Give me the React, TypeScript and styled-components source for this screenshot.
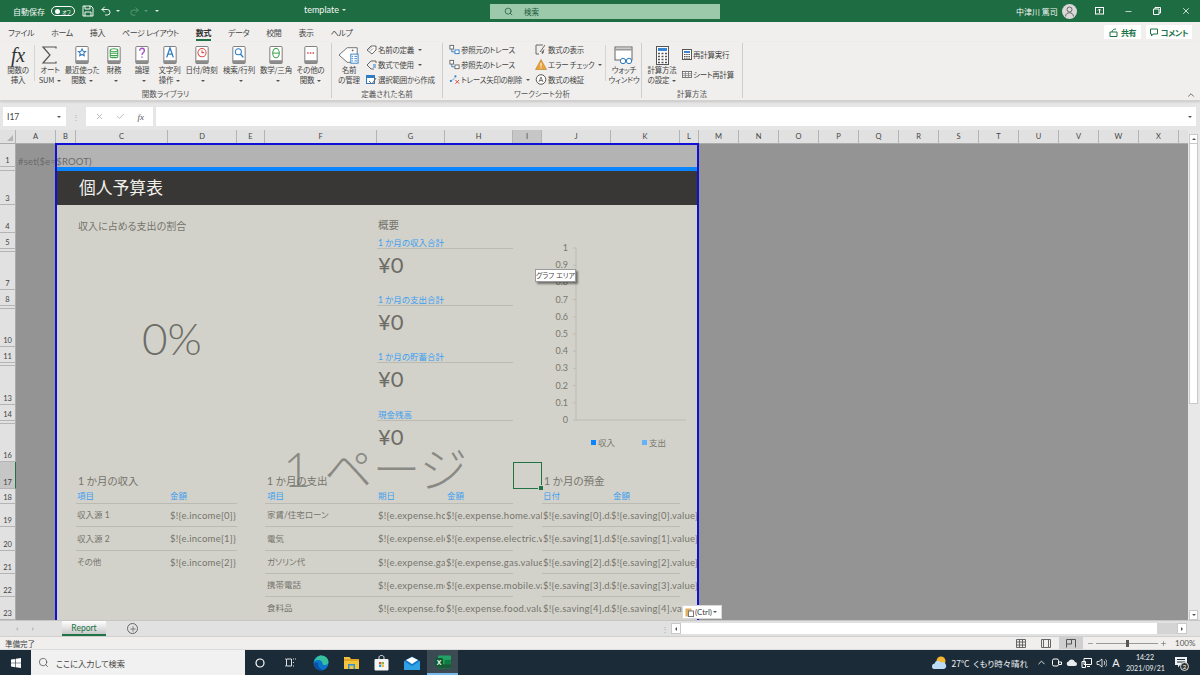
import React from "react";
import styled, { createGlobalStyle } from "styled-components";
import { Search, X, Check, ChevronUp, Undo2, Redo2, Plus, Minus } from "lucide-react";

const GlobalStyle = createGlobalStyle`
    html, body {
        margin: 0;
        padding: 0;
        width: 1200px;
        height: 675px;
        overflow: hidden;
        background: #f0efed;
        font-family: "Noto Sans CJK JP", "Noto Sans", sans-serif;
        font-feature-settings: "palt";
    }
    * {
        box-sizing: border-box;
    }
    svg {
        display: block;
        flex: none;
    }
`;

const Page = styled.div`
    width: 1200px;
    height: 675px;
    display: flex;
    flex-direction: column;
`;

/* title bar */
const TitleBar = styled.div`
    height: 22px;
    flex: none;
    position: relative;
    background: #1e6c41;
    color: #f2f7f4;
    display: flex;
    align-items: center;
    font-size: 8px;
`;
const QuickAccess = styled.div`
    width: 490px;
    display: flex;
    align-items: center;
    padding-left: 13px;
    gap: 6px;
`;
const AutoSaveToggle = styled.div`
    width: 24px;
    height: 10px;
    margin-right: 1px;
    border: 1px solid #fff;
    border-radius: 5px;
    display: flex;
    align-items: center;
    padding-left: 3px;
    gap: 2px;
    font-size: 5px;
    &::before {
        content: "";
        width: 5px;
        height: 5px;
        border-radius: 50%;
        background: #fff;
    }
`;
const MenuCaret = styled.span`
    margin-left: -2px;
    margin-right: 3px;
    width: 0;
    height: 0;
    border-left: 2px solid transparent;
    border-right: 2px solid transparent;
    border-top: 2px solid ${(p) => p.color ?? "#dfeae4"};
`;
const DocName = styled.div`
    position: absolute;
    left: 304px;
    top: 4px;
    display: flex;
    align-items: center;
    gap: 5px;
    font-family: "Lato", sans-serif;
    font-size: 9px;
`;
const SearchBox = styled.div`
    width: 230px;
    height: 15px;
    background: #9bc9aa;
    color: #22593b;
    display: flex;
    align-items: center;
    padding-left: 14px;
    gap: 11px;
    font-size: 7.5px;
`;
const AccountArea = styled.div`
    flex: 1;
    display: flex;
    align-items: center;
    padding-left: 296px;
`;
const UserName = styled.span`
    width: 46px;
    font-size: 8px;
    white-space: nowrap;
`;
const Avatar = styled.div`
    width: 15px;
    height: 15px;
    border-radius: 50%;
    background: #d8d8d8;
    display: flex;
    align-items: center;
    justify-content: center;
`;
const WindowButton = styled.div<{ $w: number }>`
    width: ${(p) => p.$w}px;
    display: flex;
    justify-content: center;
`;

/* tabs */
const TabRow = styled.div`
    height: 20px;
    flex: none;
    display: flex;
    align-items: center;
    padding-left: 8px;
    gap: 17px;
    font-size: 8px;
    letter-spacing: -0.4px;
    color: #444;
    background: #f0efed;
`;
const Tab = styled.div<{ $active?: boolean }>`
    height: 16px;
    line-height: 15px;
    margin-top: 2px;
    font-weight: ${(p) => (p.$active ? 700 : 400)};
    color: ${(p) => (p.$active ? "#333" : "#444")};
    border-bottom: 2px solid ${(p) => (p.$active ? "#217346" : "transparent")};
`;
const ShareArea = styled.div`
    margin-left: auto;
    display: flex;
    gap: 5px;
    padding-right: 8px;
`;
const ShareButton = styled.div<{ $w: number }>`
    width: ${(p) => p.$w}px;
    height: 14px;
    background: #fff;
    color: #217346;
    font-size: 8px;
    font-weight: 700;
    display: flex;
    align-items: center;
    justify-content: center;
    gap: 3px;
`;

/* ribbon */
const Ribbon = styled.div`
    height: 59px;
    flex: none;
    display: flex;
    background: #f0efed;
    border-bottom: 1px solid #d2d1cf;
    box-shadow: 0 1px 2px #c8c8c8;
    position: relative;
    z-index: 1;
`;
const Group = styled.div<{ $w: number }>`
    width: ${(p) => p.$w}px;
    display: flex;
    flex-direction: column;
    margin: 1px 0 2px;
    border-right: 1px solid #cfcecc;
`;
const GroupBody = styled.div`
    flex: 1;
    display: flex;
`;
const GroupLabel = styled.div`
    height: 11px;
    line-height: 13px;
    text-align: center;
    font-size: 7.5px;
    color: #555;
`;
const BigButton = styled.div<{ $w: number; $left?: number }>`
    width: ${(p) => p.$w}px;
    margin-left: ${(p) => p.$left ?? 0}px;
    flex: none;
    display: flex;
    flex-direction: column;
    align-items: center;
    padding-top: 2px;
    font-size: 7.5px;
    line-height: 10px;
    letter-spacing: -0.2px;
    color: #444;
    text-align: center;
    white-space: nowrap;
`;
const BigIcon = styled.div`
    height: 20px;
    display: flex;
    align-items: center;
    justify-content: center;
`;
const LabelLine = styled.div`
    height: 10px;
`;
const FxGlyph = styled.span`
    font-family: "Liberation Serif", serif;
    font-style: italic;
    font-size: 20px;
    line-height: 20px;
    color: #333;
`;
const Caret = styled.span`
    display: inline-block;
    width: 0;
    height: 0;
    margin-left: 3px;
    vertical-align: middle;
    border-left: 2px solid transparent;
    border-right: 2px solid transparent;
    border-top: 2px solid #555;
`;
const Divider = styled.div`
    width: 1px;
    height: 36px;
    margin: 2px 1px 0;
    background: #d6d5d3;
    flex: none;
`;
const SmallColumn = styled.div<{ $w: number; $top?: number; $left?: number }>`
    width: ${(p) => p.$w}px;
    flex: none;
    display: flex;
    flex-direction: column;
    margin-top: -1px;
    padding-top: ${(p) => p.$top ?? 0}px;
    padding-left: ${(p) => p.$left ?? 0}px;
`;
const SmallButton = styled.div<{ $h?: number }>`
    height: ${(p) => p.$h ?? 15}px;
    display: flex;
    align-items: center;
    gap: 1px;
    font-size: 7.5px;
    letter-spacing: -0.25px;
    color: #444;
    white-space: nowrap;
`;
const CollapseButton = styled.div`
    margin-left: auto;
    align-self: flex-end;
    padding: 0 4px 0 0;
    color: #555;
`;

/* formula bar */
const FormulaBar = styled.div`
    height: 29px;
    flex: none;
    background: #e6e6e6;
    display: flex;
    align-items: center;
    padding: 2px 4px 0 3px;
`;
const NameBox = styled.div`
    width: 63px;
    height: 19px;
    background: #fff;
    display: flex;
    align-items: center;
    justify-content: space-between;
    padding: 0 5px 0 4px;
    font-family: "Lato", sans-serif;
    font-size: 8.5px;
    color: #444;
`;
const Grip = styled.div`
    width: 20px;
    text-align: center;
    font-size: 8px;
    color: #aaa;
`;
const FormulaButtons = styled.div`
    width: 67px;
    height: 19px;
    background: #fff;
    display: flex;
    align-items: center;
    justify-content: space-around;
    padding: 0 3px;
    color: #aaa;
`;
const FxSmall = styled.span`
    font-family: "Liberation Serif", serif;
    font-style: italic;
    font-size: 9px;
    color: #555;
`;
const FormulaInput = styled.div`
    flex: 1;
    height: 19px;
    margin-left: 3px;
    background: #fff;
    display: flex;
    align-items: center;
    justify-content: flex-end;
    padding-right: 4px;
`;

/* sheet */
const SheetRow = styled.div`
    height: 490px;
    flex: none;
    display: flex;
`;
const Sheet = styled.div`
    width: 1188px;
    position: relative;
    overflow: hidden;
    background: #949494;
    display: grid;
    grid-template-columns: 16px 40px 20px 92px 69px 28px 112px 68px 68px 29px 69px 69px 19px repeat(12, 40px) 1fr;
    grid-template-rows: 14px 23px 4px 34px 28px 16px 3px 38px 16px 3px 38px 16px 3px 39px 16px 3px 38px 27px 15px 23px 24px 23px 23px 23px;
    font-family: "Lato", "Noto Sans CJK JP", sans-serif;
    color: #74746d;
`;
const ColumnHeader = styled.div<{ $col: number; $selected?: boolean }>`
    grid-row: 1;
    grid-column: ${(p) => p.$col};
    background: ${(p) => (p.$selected ? "#c6c6c6" : "#e1e1e1")};
    border-right: 1px solid #b4b4b4;
    border-bottom: 1px solid ${(p) => (p.$selected ? "#217346" : "#ababab")};
    font-size: 7.5px;
    line-height: 13px;
    text-align: center;
    color: #444;
`;
const FillerHeader = styled.div`
    grid-row: 1;
    grid-column: 26;
    background: #e1e1e1;
    border-bottom: 1px solid #ababab;
`;
const CornerCell = styled.div`
    grid-row: 1;
    grid-column: 1;
    background: #e1e1e1;
    border-right: 1px solid #b4b4b4;
    border-bottom: 1px solid #ababab;
    position: relative;
    &::after {
        content: "";
        position: absolute;
        right: 2px;
        bottom: 2px;
        border-left: 6px solid transparent;
        border-bottom: 6px solid #b4b4b4;
    }
`;
const RowHeader = styled.div<{ $row: number; $selected?: boolean }>`
    grid-column: 1;
    grid-row: ${(p) => p.$row + 1};
    background: ${(p) => (p.$selected ? "#c6c6c6" : "#e1e1e1")};
    border-right: 1px solid ${(p) => (p.$selected ? "#217346" : "#ababab")};
    border-bottom: 1px solid #b4b4b4;
    overflow: hidden;
    display: flex;
    align-items: flex-end;
    justify-content: center;
    font-size: 7.5px;
    line-height: 11px;
    color: #444;
`;

const columns = "ABCDEFGHIJKLMNOPQRSTUVWX".split("");
const colLine = (c: string) => columns.indexOf(c) + 2;

type Span = { $from: string; $to?: string; $row: number; $rowEnd?: number };
const Cell = styled.div<Span & { $align?: string; $pad?: number; $blue?: boolean }>`
    grid-column: ${(p) => colLine(p.$from)} / ${(p) => colLine(p.$to ?? p.$from) + 1};
    grid-row: ${(p) => p.$row + 1} / ${(p) => (p.$rowEnd ?? p.$row) + 2};
    display: flex;
    align-items: ${(p) => p.$align ?? "center"};
    padding-left: ${(p) => p.$pad ?? 1}px;
    font-size: 8.5px;
    line-height: 1.2;
    white-space: nowrap;
    overflow: hidden;
    min-width: 0;
    color: ${(p) => (p.$blue ? "#3c9ff0" : "#74746d")};
`;
const ValueCell = styled(Cell)`
    font-size: 9.5px;
    letter-spacing: 0.25px;
`;
const Band = styled.div<Span & { $bg: string }>`
    grid-column: ${(p) => colLine(p.$from)} / ${(p) => colLine(p.$to ?? p.$from) + 1};
    grid-row: ${(p) => p.$row + 1} / ${(p) => (p.$rowEnd ?? p.$row) + 2};
    background: ${(p) => p.$bg};
`;
const Rule = styled.div<Span>`
    grid-column: ${(p) => colLine(p.$from)} / ${(p) => colLine(p.$to ?? p.$from) + 1};
    grid-row: ${(p) => p.$row + 1};
    align-self: end;
    height: 1px;
    background: #bcbbb3;
`;
const SetCell = styled(Cell)`
    overflow: visible;
    color: #6a6a6a;
    padding-left: 2px;
    align-items: flex-end;
    font-size: 9.5px;
    letter-spacing: 0.2px;
`;
const HeadingCell = styled(Cell)`
    color: #f0f0ea;
    font-size: 16.8px;
    padding-left: 3px;
    overflow: visible;
`;
const SectionTitle = styled(Cell)<{ $size?: number }>`
    overflow: visible;
    font-size: ${(p) => p.$size ?? 10.5}px;
    align-items: flex-end;
    padding-bottom: 1px;
`;
const BigPercent = styled(Cell)`
    justify-content: center;
    font-size: 44px;
    padding: 0 0 18px 3px;
    font-weight: 300;
    color: #6d6d67;
    overflow: visible;
`;
const SummaryLabel = styled(Cell)`
    align-items: flex-end;
    padding-bottom: 1px;
    overflow: visible;
`;
const Yen = styled(Cell)`
    align-items: flex-start;
    font-size: 22px;
    overflow: visible;
    padding-top: 0;
    color: #6d6d67;
`;
const ReportFrame = styled.div`
    grid-column: ${colLine("B")} / ${colLine("L") + 1};
    grid-row: 2 / -1;
    border: 2px solid #1010d8;
    border-bottom: none;
    margin-left: -1px;
    margin-top: -1px;
    pointer-events: none;
`;
const SelectedCell = styled.div`
    grid-column: ${colLine("I")};
    grid-row: 18;
    border: 1.5px solid #217346;
    position: relative;
    &::after {
        content: "";
        position: absolute;
        right: -3px;
        bottom: -3px;
        width: 4px;
        height: 4px;
        background: #217346;
        border: 1px solid #d3d2ca;
    }
`;
const ChartCell = styled.div`
    grid-column: ${colLine("I")} / ${colLine("L") + 1};
    grid-row: 6 / 18;
    position: relative;
`;
const ChartTip = styled.div`
    position: absolute;
    left: 22px;
    top: 36px;
    width: 41px;
    height: 13px;
    background: #fff;
    border: 1px solid #9a9a9a;
    box-shadow: 2px 2px 2px rgba(0, 0, 0, 0.45);
    font-size: 7px;
    line-height: 11px;
    text-align: center;
    color: #444;
    white-space: nowrap;
`;
const Watermark = styled.div`
    position: absolute;
    left: 283px;
    top: 304px;
    font-size: 48px;
    line-height: 70px;
    color: rgba(110, 110, 106, 0.72);
    white-space: nowrap;
    font-weight: 300;
    pointer-events: none;
`;
const PasteOptions = styled.div`
    position: absolute;
    left: 682px;
    top: 475px;
    width: 40px;
    height: 14px;
    background: #fff;
    border: 1px solid #d8d8d8;
    display: flex;
    align-items: center;
    gap: 1px;
    padding-left: 2px;
    font-size: 8px;
    color: #444;
`;
const VScroll = styled.div`
    flex: 1;
    background: #e8e8e8;
    display: flex;
    flex-direction: column;
    padding: 4px 2px 0 1px;
    height: 490px;
`;
const ScrollArrow = styled.div`
    flex: none;
    height: 10px;
    background: #fff;
    border: 1px solid #c9c9c9;
    display: flex;
    align-items: center;
    justify-content: center;
`;
const VThumb = styled.div`
    flex: none;
    height: 260px;
    background: #fff;
    border: 1px solid #c9c9c9;
    border-top: none;
`;
const VSpacer = styled.div`
    flex: 1;
`;
const Triangle = styled.span<{ $dir: "up" | "down" | "left" | "right"; $color?: string }>`
    width: 0;
    height: 0;
    border: 2.5px solid transparent;
    ${(p) => `border-${{ up: "bottom", down: "top", left: "right", right: "left" }[p.$dir]}-color: ${p.$color ?? "#555"};`}
    ${(p) => `margin-${{ up: "top", down: "bottom", left: "left", right: "right" }[p.$dir]}: -2px;`}
`;

/* sheet tabs */
const TabStrip = styled.div`
    height: 17px;
    flex: none;
    position: relative;
    background: #e1e1e1;
    border-top: 1px solid #c6c6c6;
    border-bottom: 1px solid #cfcfcf;
    display: flex;
    align-items: center;
`;
const TabArrows = styled.div`
    width: 62px;
    display: flex;
    gap: 14px;
    padding-left: 16px;
`;
const SheetTab = styled.div`
    width: 44px;
    height: 15px;
    margin-top: -1px;
    background: linear-gradient(#ffffff, #c9c9c9);
    border-bottom: 2px solid #217346;
    color: #217346;
    font-family: "Lato", sans-serif;
    font-size: 8.5px;
    line-height: 14px;
    text-align: center;
`;
const AddSheet = styled.div`
    width: 11px;
    height: 11px;
    margin-left: 21px;
    border: 1px solid #666;
    border-radius: 50%;
    display: flex;
    align-items: center;
    justify-content: center;
    color: #555;
`;
const StripGrip = styled.div`
    margin-left: auto;
    width: 12px;
    color: #aaa;
    font-size: 8px;
    text-align: center;
`;
const HScroll = styled.div`
    width: 516px;
    height: 11px;
    margin-right: 13px;
    display: flex;
    background: #d4d4d4;
`;
const HArrow = styled(ScrollArrow)`
    width: 10px;
    height: 11px;
`;
const HThumb = styled.div`
    width: 476px;
    background: #fff;
`;
const HSpace = styled.div`
    flex: 1;
`;

/* status bar */
const StatusBar = styled.div`
    height: 13px;
    flex: none;
    background: #f0efed;
    border-bottom: 1px solid #dcdcdc;
    display: flex;
    align-items: center;
    padding-left: 5px;
    font-size: 7.5px;
    color: #444;
`;
const ViewArea = styled.div`
    margin-left: auto;
    display: flex;
    align-items: center;
    height: 100%;
`;
const ViewButton = styled.div<{ $active?: boolean }>`
    width: 24px;
    height: 100%;
    margin-left: 1px;
    background: ${(p) => (p.$active ? "#cfcfcf" : "transparent")};
    display: flex;
    align-items: center;
    justify-content: center;
`;
const ZoomMinus = styled.div`
    margin-left: 3.5px;
`;
const ZoomSlider = styled.div`
    width: 62px;
    height: 1px;
    margin: 0 2px;
    background: #999;
    position: relative;
    &::after {
        content: "";
        position: absolute;
        left: 30px;
        top: -3px;
        width: 3px;
        height: 7px;
        background: #555;
    }
`;
const ZoomValue = styled.span`
    width: 33.5px;
    padding-left: 8.5px;
    font-family: "Lato", sans-serif;
    font-size: 8px;
    color: #555;
`;

/* taskbar */
const Taskbar = styled.div`
    height: 25px;
    flex: none;
    background: #1b2b37;
    display: flex;
    align-items: center;
    color: #eef1f3;
`;
const StartButton = styled.div`
    width: 31px;
    display: flex;
    justify-content: center;
`;
const TaskSearch = styled.div`
    width: 214px;
    height: 25px;
    background: #f1f1f1;
    color: #444;
    display: flex;
    align-items: center;
    gap: 7px;
    padding-left: 7px;
    font-size: 8.2px;
`;
const TaskIcon = styled.div<{ $active?: boolean }>`
    width: 30.4px;
    height: 25px;
    display: flex;
    align-items: center;
    justify-content: center;
    background: ${(p) => (p.$active ? "#3b4a53" : "transparent")};
    border-bottom: ${(p) => (p.$active ? "2px solid #76b9ed" : "none")};
`;
const TaskIcons = styled.div`
    display: flex;
`;
const Tray = styled.div`
    margin-left: auto;
    display: flex;
    align-items: center;
    font-size: 8.5px;
`;
const WeatherText = styled.span`
    width: 87px;
    padding-left: 5px;
    white-space: nowrap;
    word-spacing: 2px;
`;
const TrayIcon = styled.div`
    width: 15px;
    display: flex;
    justify-content: center;
    font-family: "Liberation Sans", sans-serif;
    font-size: 11px;
`;
const Clock = styled.div`
    width: 38px;
    margin-left: 2.5px;
    text-align: center;
    font-family: "Lato", sans-serif;
    font-size: 7px;
    line-height: 11px;
    white-space: nowrap;
`;
const NotifyBox = styled.div`
    width: 34px;
    margin-right: 2px;
    display: flex;
    justify-content: center;
    position: relative;
`;
const NotifyBadge = styled.span`
    position: absolute;
    left: 16px;
    top: 5px;
    width: 9px;
    height: 9px;
    border-radius: 50%;
    background: #333;
    border: 1px solid #ddd;
    font-family: "Lato", sans-serif;
    font-size: 6px;
    line-height: 7px;
    text-align: center;
    color: #fff;
`;

/* ---- icons ---- */
const Book = ({ color, children }: { color: string; children: React.ReactNode }) => (
    <svg width="14" height="18" viewBox="0 0 14 19">
        <rect x="0.5" y="0.5" width="13" height="18" rx="1" fill="#fff" stroke="#777" />
        <rect x="0.5" y="15" width="13" height="3.5" fill="#8c8c8c" />
        <g stroke={color} fill="none" strokeWidth="1.1" color={color}>
            {children}
        </g>
    </svg>
);
const SigmaIcon = () => (
    <svg width="18" height="18" viewBox="0 0 18 18">
        <path d="M15 2.5V1H2l7 8-7 8h13v-1.5" fill="none" stroke="#555" strokeWidth="1.2" />
    </svg>
);
const NameTagIcon = () => (
    <svg width="22" height="20" viewBox="0 0 24 22">
        <path d="M1 11 10 3h11v16H10z" fill="#fff" stroke="#666" />
        <circle cx="16" cy="6" r="1" fill="#666" />
        <rect x="14" y="10" width="8" height="10" fill="#fff" stroke="#2f7cc4" />
        <path d="M15 12.5h1.5M18 12.5h3M15 15h1.5M18 15h3M15 17.5h1.5M18 17.5h3" stroke="#2f7cc4" />
    </svg>
);
const TagIcon = () => (
    <svg width="11" height="10" viewBox="0 0 11 10">
        <path d="M1 5 5 1h5v4L6 9z" fill="#fff" stroke="#666" />
        <path d="M2.5 5 5.5 2M4 6.5 7 3.5" stroke="#999" />
    </svg>
);
const UseInFormulaIcon = () => (
    <svg width="11" height="10" viewBox="0 0 11 10">
        <path d="M1 5 5 1h5v2M8 9H5L1 5" fill="none" stroke="#666" />
        <path d="M7 5h3M7 7h3" stroke="#2f7cc4" />
    </svg>
);
const FromSelectionIcon = () => (
    <svg width="11" height="10" viewBox="0 0 11 10">
        <rect x="0.5" y="0.5" width="8" height="8" fill="#fff" stroke="#2f7cc4" />
        <rect x="1" y="1" width="7" height="2" fill="#2f7cc4" />
        <path d="m3 6 3 3 4-6" fill="none" stroke="#666" />
    </svg>
);
const TraceIcon = ({ flip }: { flip?: boolean }) => (
    <svg width="11" height="11" viewBox="0 0 12 11">
        <rect x="1" y="1" width="4" height="4" fill="#fff" stroke="#666" />
        <rect x="6.5" y="6" width="4.5" height="4" fill="#fff" stroke={flip ? "#666" : "#2f7cc4"} />
        <path d="M3 5v3h3" fill="none" stroke="#2f7cc4" />
    </svg>
);
const TraceRemoveIcon = () => (
    <svg width="11" height="11" viewBox="0 0 12 11">
        <path d="m2 8 5-5" stroke="#2f7cc4" strokeDasharray="1.5 1" />
        <rect x="1" y="6" width="2" height="2" fill="#2f7cc4" />
        <rect x="6" y="1" width="2" height="2" fill="#2f7cc4" />
        <path d="m7 6 4 4m0-4-4 4" stroke="#d9413a" />
    </svg>
);
const ShowFormulaIcon = () => (
    <svg width="12" height="11" viewBox="0 0 12 11">
        <path d="M8 1H1v9h3M10 1 5 8" fill="none" stroke="#666" />
        <path d="M7 10c1-.5 1-4 2-4.500M6.500 8H9" fill="none" stroke="#333" strokeWidth="0.8" />
    </svg>
);
const WarningIcon = () => (
    <svg width="12" height="11" viewBox="0 0 12 11">
        <path d="M6 .5 11.500 10.500H.5z" fill="#e8a33d" stroke="#b97c1f" strokeWidth="0.6" />
        <path d="M6 4v3.500M6 8.500v1" stroke="#fff" />
    </svg>
);
const EvalIcon = () => (
    <svg width="12" height="11" viewBox="0 0 12 11">
        <circle cx="6" cy="5.500" r="4.800" fill="#fff" stroke="#555" />
        <path d="M4 8 6 3l2 5M4.800 6.500h2.400" fill="none" stroke="#555" strokeWidth="0.8" />
    </svg>
);
const WatchIcon = () => (
    <svg width="20" height="19" viewBox="0 0 20 19">
        <rect x="1" y="1" width="17" height="13" fill="#fff" stroke="#666" />
        <path d="M1 3.500h17" stroke="#999" strokeWidth="2" />
        <circle cx="9" cy="15" r="2.700" fill="#fff" stroke="#2f7cc4" />
        <circle cx="15" cy="15" r="2.700" fill="#fff" stroke="#2f7cc4" />
        <path d="M11.500 14.500h1" stroke="#2f7cc4" />
    </svg>
);
const CalculatorIcon = () => (
    <svg width="13" height="19" viewBox="0 0 13 19">
        <rect x="0.5" y="0.5" width="12" height="18" fill="#fff" stroke="#555" />
        <rect x="2" y="2" width="9" height="3" fill="#3a86d0" />
        <path d="M2 7.500h9M2 10.500h9M2 13.500h9M2 16.500h9" stroke="#555" strokeWidth="1.5" strokeDasharray="2 1.500" />
    </svg>
);
const CalcNowIcon = () => (
    <svg width="10" height="11" viewBox="0 0 10 11">
        <rect x="0.5" y="0.5" width="9" height="10" fill="#fff" stroke="#555" />
        <rect x="2" y="2" width="6" height="2" fill="#3a86d0" />
        <path d="M2 5.500h6M2 7.500h6M2 9.200h6" stroke="#555" strokeDasharray="1.500 .7" />
    </svg>
);
const CalcSheetIcon = () => (
    <svg width="10" height="11" viewBox="0 0 13 11">
        <rect x="0.5" y="1.500" width="12" height="8" fill="#fff" stroke="#555" />
        <path d="M4.500 1.500v8M8.500 1.500v8M.5 4.500h12M.5 7h12" stroke="#777" />
    </svg>
);
const SaveIcon = () => (
    <svg width="12" height="12" viewBox="0 0 12 12">
        <path d="M1 1h8l2 2v8H1zM3 1v3h5V1M3 11V7h6v4" fill="none" stroke="#f2f7f4" />
    </svg>
);
const WindowsLogo = () => (
    <svg width="10" height="10" viewBox="0 0 10 10">
        <path d="M0 1.500 4.200.9v3.900H0zM4.800.8 10 0v4.800H4.800zM0 5.300h4.200v3.900L0 8.600zM4.800 5.300H10V10l-5.200-.8z" fill="#fff" />
    </svg>
);
const EdgeLogo = () => (
    <svg width="16" height="16" viewBox="0 0 16 16">
        <circle cx="8" cy="8" r="7.500" fill="#0c74c9" />
        <path d="M1 7c1-4 4-6.500 7.500-6.500C12.500.5 15.500 3.500 15.500 7c0 2-1.500 3-3.500 3-1.500 0-2.500-.5-2.500-1.500C9.500 6 7 4.500 4.500 5 2.800 5.300 1.800 6 1 7z" fill="#35c1a0" />
        <path d="M5 8c-.5 3 1.500 6 5.500 7-4 1.200-8.500-1-9.500-6 1-1.300 2.500-1.800 4-1z" fill="#0b4f9e" />
    </svg>
);
const ExplorerLogo = () => (
    <svg width="15" height="14" viewBox="0 0 15 14">
        <path d="M0 1h5.500l1.500 2h8v10H0z" fill="#f3c33e" />
        <rect y="3" width="15" height="2" fill="#e2a522" />
        <rect x="4" y="8" width="7" height="5" fill="#2f8fd8" />
        <rect x="5.500" y="9.500" width="4" height="3.500" fill="#f3c33e" />
    </svg>
);
const StoreLogo = () => (
    <svg width="15" height="16" viewBox="0 0 15 16">
        <path d="M5 4V2.500C5 1.200 6 .5 7.500.5S10 1.200 10 2.500V4" fill="none" stroke="#eee" />
        <rect x="0.500" y="4" width="14" height="11.500" rx="1" fill="#f5f5f5" />
        <rect x="5" y="7" width="2.300" height="2.300" fill="#e8503a" />
        <rect x="7.700" y="7" width="2.300" height="2.300" fill="#7cbb3c" />
        <rect x="5" y="9.700" width="2.300" height="2.300" fill="#2c9be0" />
        <rect x="7.700" y="9.700" width="2.300" height="2.300" fill="#f5b92f" />
    </svg>
);
const MailLogo = () => (
    <svg width="16" height="14" viewBox="0 0 16 14">
        <path d="M0 5 8 .5 16 5v9H0z" fill="#1479c9" />
        <path d="m2 4 6-3 6 3-6 4z" fill="#fff" />
        <path d="M0 5v9h16V5L8 10z" fill="#2fa2e6" />
    </svg>
);
const ExcelLogo = () => (
    <svg width="16" height="14" viewBox="0 0 16 14">
        <rect x="3" y="0.500" width="13" height="13" rx="1" fill="#21a366" />
        <rect x="9.500" y="4.800" width="6.500" height="4.400" fill="#107c41" />
        <rect x="3" y="9.200" width="13" height="4.300" fill="#185c37" />
        <rect y="3" width="8" height="8" rx="1" fill="#0e5c30" />
        <text x="4" y="9.500" textAnchor="middle" fontSize="7" fontWeight="700" fill="#fff" fontFamily="Liberation Sans">
            X
        </text>
    </svg>
);
const WeatherIcon = () => (
    <svg width="15" height="14" viewBox="0 0 15 14">
        <circle cx="9" cy="5" r="4.500" fill="#f5b72f" />
        <path d="M3 13a2.800 2.800 0 0 1-.4-5.600A3.500 3.500 0 0 1 9 6.500 3 3 0 0 1 12 13z" fill="#bcdcf5" />
    </svg>
);

const libraryButtons = [
    { w: 28, label: ["オート", "SUM"], icon: <SigmaIcon /> },
    {
        w: 36,
        label: ["最近使った", "関数"],
        icon: (
            <Book color="#2f7cc4">
                <path d="m7 3 1.200 2.500 2.600.3-1.900 1.800.5 2.600L7 8.900 4.600 10.200l.5-2.600L3.200 5.800l2.600-.3z" />
            </Book>
        ),
    },
    {
        w: 28,
        label: ["財務", ""],
        icon: (
            <Book color="#3fa34d">
                <ellipse cx="7" cy="4.500" rx="4" ry="1.500" />
                <path d="M3 4.500v7c0 1 8 1 8 0v-7M3 7c0 1 8 1 8 0M3 9.500c0 1 8 1 8 0" />
            </Book>
        ),
    },
    {
        w: 28,
        label: ["論理", ""],
        icon: (
            <Book color="#a64fc0">
                <path d="M4.500 5c0-3.500 5-3.500 5 0 0 2-2.500 2-2.500 4.500M7 11v1.500" strokeWidth="1.400" />
            </Book>
        ),
    },
    {
        w: 27,
        label: ["文字列", "操作"],
        icon: (
            <Book color="#2f7cc4">
                <path d="m3.500 12 3.500-10 3.500 10M4.800 8.500h4.400" strokeWidth="1.400" />
            </Book>
        ),
    },
    {
        w: 37,
        label: ["日付/時刻", ""],
        icon: (
            <Book color="#d9534f">
                <circle cx="7" cy="7" r="4.300" />
                <path d="M7 4.500V7h2.300" />
            </Book>
        ),
    },
    {
        w: 38,
        label: ["検索/行列", ""],
        icon: (
            <Book color="#2f7cc4">
                <circle cx="6.300" cy="6" r="3.200" />
                <path d="m8.500 8.500 3 3.500" strokeWidth="1.500" />
            </Book>
        ),
    },
    {
        w: 36,
        label: ["数学/三角", ""],
        icon: (
            <Book color="#3fa34d">
                <ellipse cx="7" cy="7.500" rx="3.500" ry="5" />
                <path d="M3.500 7.500h7" />
            </Book>
        ),
    },
    {
        w: 33,
        label: ["その他の", "関数"],
        icon: (
            <Book color="#d9413a">
                <path d="M3 7.500h8" strokeWidth="1.600" strokeDasharray="1.500 1.300" />
            </Book>
        ),
    },
];

const rowNumbers = Array.from({ length: 23 }, (_, i) => i + 1);
const summaries = [
    { label: "1 か月の収入合計", row: 5 },
    { label: "1 か月の支出合計", row: 8 },
    { label: "1 か月の貯蓄合計", row: 11 },
    { label: "現金残高", row: 14 },
];
const incomes = ["収入源 1", "収入源 2", "その他"];
const expenses = [
    ["家賃/住宅ローン", "home"],
    ["電気", "electric"],
    ["ガソリン代", "gas"],
    ["携帯電話", "mobile"],
    ["食料品", "food"],
];
const ticks = [1, 0.9, 0.8, 0.7, 0.6, 0.5, 0.4, 0.3, 0.2, 0.1, 0];

function BudgetChart() {
    return (
        <svg width="186" height="229" viewBox="0 0 186 229" fontFamily="Lato, sans-serif" fontSize="9" fill="#77776f">
            <path d="M63 15v172h110" fill="none" stroke="#bdbcb4" />
            {ticks.map((t, i) => {
                const y = 15 + i * 17.2;
                return (
                    <g key={t}>
                        <path d={`M60 ${y}h3`} stroke="#bdbcb4" />
                        <text x="55" y={y + 3} textAnchor="end">
                            {t}
                        </text>
                    </g>
                );
            })}
            <rect x="78" y="207" width="5" height="5" fill="#0a84ff" />
            <text x="85" y="213" fontFamily="Noto Sans CJK JP" fontSize="8.500">収入</text>
            <rect x="129" y="207" width="5" height="5" fill="#63b3f8" />
            <text x="136" y="213" fontFamily="Noto Sans CJK JP" fontSize="8.500">支出</text>
        </svg>
    );
}

export default function App() {
    return (
        <Page>
            <GlobalStyle />
            <TitleBar>
                <QuickAccess>
                    <span>自動保存</span>
                    <AutoSaveToggle>オフ</AutoSaveToggle>
                    <SaveIcon />
                    <Undo2 size={12} color="#f2f7f4" />
                    <MenuCaret />
                    <Redo2 size={11} color="#5d9a78" />
                    <MenuCaret color="#5d9a78" />
                    <MenuCaret />
                </QuickAccess>
                <DocName>
                    template
                    <MenuCaret />
                </DocName>
                <SearchBox>
                    <Search size={9} strokeWidth={2} />
                    検索
                </SearchBox>
                <AccountArea>
                    <UserName>中津川 篤司</UserName>
                    <Avatar>
                        <svg width="11" height="11" viewBox="0 0 11 11">
                            <circle cx="5.500" cy="3.500" r="2.500" fill="none" stroke="#666" />
                            <path d="M1.500 10.500c0-5 8-5 8 0" fill="none" stroke="#666" />
                        </svg>
                    </Avatar>
                    <WindowButton $w={44}>
                        <svg width="9" height="8" viewBox="0 0 9 8">
                            <rect x="0.500" y="0.500" width="8" height="6.500" fill="none" stroke="#fff" />
                            <path d="M4.500 6V2M3 3.500l1.500-1.500L6 3.500" fill="none" stroke="#fff" />
                        </svg>
                    </WindowButton>
                    <WindowButton $w={14}>
                        <Minus size={9} />
                    </WindowButton>
                    <WindowButton $w={44}>
                        <svg width="8" height="8" viewBox="0 0 8 8">
                            <path d="M2 2V.5h5.500V6H6M.5 2H6v5.500H.5z" fill="none" stroke="#fff" />
                        </svg>
                    </WindowButton>
                    <WindowButton $w={14}>
                        <X size={10} />
                    </WindowButton>
                </AccountArea>
            </TitleBar>

            <TabRow>
                <Tab>ファイル</Tab>
                <Tab>ホーム</Tab>
                <Tab>挿入</Tab>
                <Tab>ページ レイアウト</Tab>
                <Tab $active>数式</Tab>
                <Tab>データ</Tab>
                <Tab>校閲</Tab>
                <Tab>表示</Tab>
                <Tab>ヘルプ</Tab>
                <ShareArea>
                    <ShareButton $w={37}>
                        <svg width="9" height="9" viewBox="0 0 9 9">
                            <path d="M1 4h7v4.500H1zM3 4c0-2 2-3 4-3" fill="none" stroke="#217346" />
                        </svg>
                        共有
                    </ShareButton>
                    <ShareButton $w={46}>
                        <svg width="8" height="9" viewBox="0 0 8 9">
                            <path d="M.5 1h7v5H3L1.500 8V6h-1z" fill="none" stroke="#217346" />
                        </svg>
                        コメント
                    </ShareButton>
                </ShareArea>
            </TabRow>

            <Ribbon>
                <Group $w={332}>
                    <GroupBody>
                        <BigButton $w={30} $left={3}>
                            <BigIcon>
                                <FxGlyph>fx</FxGlyph>
                            </BigIcon>
                            <LabelLine>関数の</LabelLine>
                            <LabelLine>挿入</LabelLine>
                        </BigButton>
                        <Divider />
                        {libraryButtons.map((b) => (
                            <BigButton $w={b.w} key={b.label[0]}>
                                <BigIcon>{b.icon}</BigIcon>
                                <LabelLine>{b.label[0]}</LabelLine>
                                <LabelLine>
                                    {b.label[1]}
                                    <Caret />
                                </LabelLine>
                            </BigButton>
                        ))}
                    </GroupBody>
                    <GroupLabel>関数ライブラリ</GroupLabel>
                </Group>
                <Group $w={111}>
                    <GroupBody>
                        <BigButton $w={34}>
                            <BigIcon>
                                <NameTagIcon />
                            </BigIcon>
                            <LabelLine>名前</LabelLine>
                            <LabelLine>の管理</LabelLine>
                        </BigButton>
                        <SmallColumn $w={72}>
                            <SmallButton>
                                <TagIcon />
                                名前の定義
                                <Caret />
                            </SmallButton>
                            <SmallButton>
                                <UseInFormulaIcon />
                                数式で使用
                                <Caret />
                            </SmallButton>
                            <SmallButton>
                                <FromSelectionIcon />
                                選択範囲から作成
                            </SmallButton>
                        </SmallColumn>
                    </GroupBody>
                    <GroupLabel>定義された名前</GroupLabel>
                </Group>
                <Group $w={199}>
                    <GroupBody>
                        <SmallColumn $w={92} $left={6}>
                            <SmallButton>
                                <TraceIcon />
                                参照元のトレース
                            </SmallButton>
                            <SmallButton>
                                <TraceIcon flip />
                                参照先のトレース
                            </SmallButton>
                            <SmallButton>
                                <TraceRemoveIcon />
                                トレース矢印の削除
                                <Caret />
                            </SmallButton>
                        </SmallColumn>
                        <SmallColumn $w={69}>
                            <SmallButton>
                                <ShowFormulaIcon />
                                数式の表示
                            </SmallButton>
                            <SmallButton>
                                <WarningIcon />
                                エラー チェック
                                <Caret />
                            </SmallButton>
                            <SmallButton>
                                <EvalIcon />
                                数式の検証
                            </SmallButton>
                        </SmallColumn>
                        <Divider />
                        <BigButton $w={34}>
                            <BigIcon>
                                <WatchIcon />
                            </BigIcon>
                            <LabelLine>ウォッチ</LabelLine>
                            <LabelLine>ウィンドウ</LabelLine>
                        </BigButton>
                    </GroupBody>
                    <GroupLabel>ワークシート分析</GroupLabel>
                </Group>
                <Group $w={101}>
                    <GroupBody>
                        <BigButton $w={40}>
                            <BigIcon>
                                <CalculatorIcon />
                            </BigIcon>
                            <LabelLine>計算方法</LabelLine>
                            <LabelLine>
                                の設定
                                <Caret />
                            </LabelLine>
                        </BigButton>
                        <SmallColumn $w={58} $top={2}>
                            <SmallButton $h={20}>
                                <CalcNowIcon />
                                再計算実行
                            </SmallButton>
                            <SmallButton $h={20}>
                                <CalcSheetIcon />
                                シート再計算
                            </SmallButton>
                        </SmallColumn>
                    </GroupBody>
                    <GroupLabel>計算方法</GroupLabel>
                </Group>
                <CollapseButton>
                    <ChevronUp size={10} />
                </CollapseButton>
            </Ribbon>

            <FormulaBar>
                <NameBox>
                    I17
                    <Triangle $dir="down" />
                </NameBox>
                <Grip>⋮</Grip>
                <FormulaButtons>
                    <X size={9} />
                    <Check size={9} />
                    <FxSmall>fx</FxSmall>
                </FormulaButtons>
                <FormulaInput>
                    <Triangle $dir="down" />
                </FormulaInput>
            </FormulaBar>

            <SheetRow>
                <Sheet>
                    <CornerCell />
                    {columns.map((c) => (
                        <ColumnHeader key={c} $col={colLine(c)} $selected={c === "I"}>
                            {c}
                        </ColumnHeader>
                    ))}
                    <FillerHeader />
                    {rowNumbers.map((n) => (
                        <RowHeader key={n} $row={n} $selected={n === 17}>
                            {[6, 9, 12, 15].includes(n) ? "" : n}
                        </RowHeader>
                    ))}

                    <Band $from="B" $to="L" $row={1} $bg="#b3b3b3" />
                    <Band $from="B" $to="L" $row={2} $bg="#0a84ff" />
                    <Band $from="B" $to="L" $row={3} $bg="#383735" />
                    <Band $from="B" $to="L" $row={4} $rowEnd={23} $bg="#d3d2ca" />

                    <SetCell $from="A" $row={1}>#set($e=$ROOT)</SetCell>
                    <HeadingCell $from="C" $to="L" $row={3}>個人予算表</HeadingCell>
                    <SectionTitle $from="C" $to="D" $row={4} $pad={2} $size={10}>収入に占める支出の割合</SectionTitle>
                    <SectionTitle $from="G" $to="H" $row={4} $pad={1}>概要</SectionTitle>
                    <BigPercent $from="C" $to="E" $row={5} $rowEnd={16}>0%</BigPercent>

                    {summaries.map((s) => (
                        <React.Fragment key={s.label}>
                            <SummaryLabel $from="G" $to="H" $row={s.row} $blue>{s.label}</SummaryLabel>
                            <Rule $from="G" $to="H" $row={s.row} />
                            <Yen $from="G" $to="H" $row={s.row + 2}>¥0</Yen>
                        </React.Fragment>
                    ))}

                    <ChartCell>
                        <BudgetChart />
                        <ChartTip>グラフ エリア</ChartTip>
                    </ChartCell>

                    <SectionTitle $from="C" $to="D" $row={17} $pad={2}>1 か月の収入</SectionTitle>
                    <SectionTitle $from="F" $row={17} $pad={2}>1 か月の支出</SectionTitle>
                    <SectionTitle $from="J" $to="K" $row={17} $pad={2}>1 か月の預金</SectionTitle>

                    <Cell $from="C" $row={18} $blue>項目</Cell>
                    <Cell $from="D" $row={18} $blue $pad={2}>金額</Cell>
                    <Cell $from="F" $row={18} $blue $pad={2}>項目</Cell>
                    <Cell $from="G" $row={18} $blue>期日</Cell>
                    <Cell $from="H" $row={18} $blue $pad={2}>金額</Cell>
                    <Cell $from="J" $row={18} $blue>日付</Cell>
                    <Cell $from="K" $row={18} $blue $pad={2}>金額</Cell>
                    <Rule $from="C" $to="D" $row={18} />
                    <Rule $from="F" $to="H" $row={18} />
                    <Rule $from="J" $to="K" $row={18} />

                    {incomes.map((name, i) => (
                        <React.Fragment key={name}>
                            <Cell $from="C" $row={19 + i}>{name}</Cell>
                            <ValueCell $from="D" $row={19 + i} $pad={2}>{`$!{e.income[${i}]}`}</ValueCell>
                            {i < 2 && <Rule $from="C" $to="D" $row={19 + i} />}
                        </React.Fragment>
                    ))}
                    {expenses.map(([name, key], i) => (
                        <React.Fragment key={key}>
                            <Cell $from="F" $row={19 + i} $pad={2}>{name}</Cell>
                            <ValueCell $from="G" $row={19 + i}>{`$!{e.expense.${key}.date}`}</ValueCell>
                            <ValueCell $from="H" $to="I" $row={19 + i} $pad={1}>{`$!{e.expense.${key}.value}`}</ValueCell>
                            <ValueCell $from="J" $row={19 + i}>{`$!{e.saving[${i}].date}`}</ValueCell>
                            <ValueCell $from="K" $to="L" $row={19 + i} $pad={0}>{`$!{e.saving[${i}].value}`}</ValueCell>
                            {i < 4 && <Rule $from="F" $to="H" $row={19 + i} />}
                            {i < 4 && <Rule $from="J" $to="K" $row={19 + i} />}
                        </React.Fragment>
                    ))}

                    <SelectedCell />
                    <ReportFrame />
                    <Watermark>1 ページ</Watermark>
                    <PasteOptions>
                        <svg width="9" height="10" viewBox="0 0 9 10">
                            <rect x="0.500" y="1.500" width="6" height="8" fill="#e0b060" />
                            <rect x="3.500" y="4" width="5" height="5.500" fill="#fff" stroke="#777" />
                        </svg>
                        (Ctrl)
                        <Triangle $dir="down" />
                    </PasteOptions>
                </Sheet>
                <VScroll>
                    <ScrollArrow>
                        <Triangle $dir="up" />
                    </ScrollArrow>
                    <VThumb />
                    <VSpacer />
                    <ScrollArrow>
                        <Triangle $dir="down" />
                    </ScrollArrow>
                </VScroll>
            </SheetRow>

            <TabStrip>
                <TabArrows>
                    <Triangle $dir="left" $color="#bbb" />
                    <Triangle $dir="right" $color="#bbb" />
                </TabArrows>
                <SheetTab>Report</SheetTab>
                <AddSheet>
                    <Plus size={8} />
                </AddSheet>
                <StripGrip>⋮</StripGrip>
                <HScroll>
                    <HArrow>
                        <Triangle $dir="left" />
                    </HArrow>
                    <HThumb />
                    <HSpace />
                    <HArrow>
                        <Triangle $dir="right" />
                    </HArrow>
                </HScroll>
            </TabStrip>

            <StatusBar>
                準備完了
                <ViewArea>
                    <ViewButton>
                        <svg width="10" height="9" viewBox="0 0 10 9">
                            <path d="M.5.5h9v8h-9zM3.500.5v8M6.500.5v8M.5 3h9M.5 6h9" fill="none" stroke="#666" />
                        </svg>
                    </ViewButton>
                    <ViewButton>
                        <svg width="10" height="9" viewBox="0 0 10 9">
                            <path d="M.5.5h9v8h-9zM2.500.5v8M7.500.5v8" fill="none" stroke="#666" />
                        </svg>
                    </ViewButton>
                    <ViewButton $active>
                        <svg width="10" height="9" viewBox="0 0 10 9">
                            <path d="M.5 8.500V.5h9v8M.5 5h5V.5" fill="none" stroke="#555" />
                        </svg>
                    </ViewButton>
                    <ZoomMinus>
                        <Minus size={7} color="#666" />
                    </ZoomMinus>
                    <ZoomSlider />
                    <Plus size={7} color="#666" />
                    <ZoomValue>100%</ZoomValue>
                </ViewArea>
            </StatusBar>

            <Taskbar>
                <StartButton>
                    <WindowsLogo />
                </StartButton>
                <TaskSearch>
                    <Search size={11} strokeWidth={1.5} />
                    ここに入力して検索
                </TaskSearch>
                <TaskIcons>
                    <TaskIcon>
                        <svg width="10" height="10" viewBox="0 0 10 10">
                            <circle cx="5" cy="5" r="4" fill="none" stroke="#fff" strokeWidth="1.200" />
                        </svg>
                    </TaskIcon>
                    <TaskIcon>
                        <svg width="11" height="9" viewBox="0 0 11 9">
                            <path d="M1.500 1h5v7h-5zM0 1h.8M0 8h.8M8 1h1M8 4.500h1M8 8h1M10 1h1" fill="none" stroke="#dfe3e6" />
                        </svg>
                    </TaskIcon>
                    <TaskIcon>
                        <EdgeLogo />
                    </TaskIcon>
                    <TaskIcon>
                        <ExplorerLogo />
                    </TaskIcon>
                    <TaskIcon>
                        <StoreLogo />
                    </TaskIcon>
                    <TaskIcon>
                        <MailLogo />
                    </TaskIcon>
                    <TaskIcon $active>
                        <ExcelLogo />
                    </TaskIcon>
                </TaskIcons>
                <Tray>
                    <WeatherIcon />
                    <WeatherText>27°C くもり時々晴れ</WeatherText>
                    <TrayIcon>
                        <ChevronUp size={11} />
                    </TrayIcon>
                    <TrayIcon>
                        <svg width="11" height="11" viewBox="0 0 11 11">
                            <rect x="1.500" y="2" width="6" height="7" rx="1.500" fill="none" stroke="#fff" />
                            <path d="M8 5h2.500v2.500H8" fill="none" stroke="#fff" />
                        </svg>
                    </TrayIcon>
                    <TrayIcon>
                        <svg width="11" height="7" viewBox="0 0 11 7">
                            <path d="M2.500 7a2.300 2.300 0 0 1 0-4.500A3.500 3.500 0 0 1 9 3a2 2 0 0 1 0 4z" fill="#e8ecef" />
                        </svg>
                    </TrayIcon>
                    <TrayIcon>
                        <svg width="11" height="10" viewBox="0 0 11 10">
                            <path d="M3 .5h7.500v6H3zM1 3.500h3.500v6H1zM6 8.500h3" fill="#1b2b37" stroke="#fff" />
                        </svg>
                    </TrayIcon>
                    <TrayIcon>
                        <svg width="11" height="10" viewBox="0 0 11 10">
                            <path d="M1 3.500h2L6 1v8L3 6.500H1zM8 3c1 1 1 3 0 4M9.500 1.500c2 2 2 5 0 7" fill="none" stroke="#fff" strokeWidth="0.800" />
                        </svg>
                    </TrayIcon>
                    <TrayIcon>A</TrayIcon>
                    <Clock>
                        14:22
                        <br />
                        2021/09/21
                    </Clock>
                    <NotifyBox>
                        <svg width="12" height="11" viewBox="0 0 12 11">
                            <path d="M0 0h12v8H5L3 10.500V8H0z" fill="#eef1f3" />
                            <path d="M2 2.500h8M2 5h8" stroke="#1b2b37" />
                        </svg>
                        <NotifyBadge>2</NotifyBadge>
                    </NotifyBox>
                </Tray>
            </Taskbar>
        </Page>
    );
}
